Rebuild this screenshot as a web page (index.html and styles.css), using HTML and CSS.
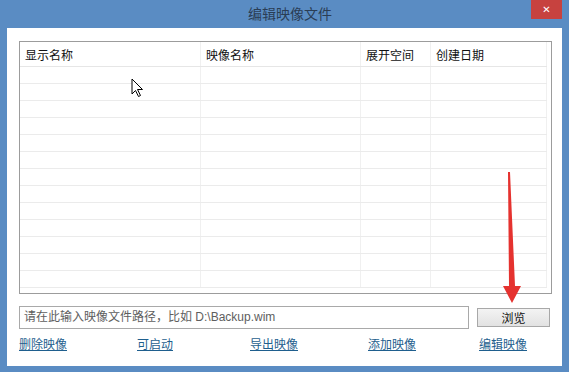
FILE: index.html
```html
<!DOCTYPE html>
<html lang="zh-CN">
  <head>
    <meta charset="UTF-8" />
    <title>编辑映像文件</title>
    <link rel="stylesheet" href="styles.css">
  </head>
  <body>
    <div class="window">
      <div class="titlebar">
        <span class="title">编辑映像文件</span>
        <span class="close">✕</span>
      </div>
      <div class="client">
        <div class="list">
          <table class="grid">
            <thead>
              <tr>
                <th class="c1">显示名称</th>
                <th class="c2">映像名称</th>
                <th class="c3">展开空间</th>
                <th class="c4">创建日期</th>
              </tr>
            </thead>
            <tbody>
              <tr><td></td><td></td><td></td><td></td></tr>
              <tr><td></td><td></td><td></td><td></td></tr>
              <tr><td></td><td></td><td></td><td></td></tr>
              <tr><td></td><td></td><td></td><td></td></tr>
              <tr><td></td><td></td><td></td><td></td></tr>
              <tr><td></td><td></td><td></td><td></td></tr>
              <tr><td></td><td></td><td></td><td></td></tr>
              <tr><td></td><td></td><td></td><td></td></tr>
              <tr><td></td><td></td><td></td><td></td></tr>
              <tr><td></td><td></td><td></td><td></td></tr>
              <tr><td></td><td></td><td></td><td></td></tr>
              <tr><td></td><td></td><td></td><td></td></tr>
              <tr><td></td><td></td><td></td><td></td></tr>
            </tbody>
          </table>
        </div>

        <div class="pathrow">
          <div class="pathbox">请在此输入映像文件路径，比如 D:\Backup.wim</div>
          <button type="button" class="browse">浏览</button>
        </div>

        <div class="links">
          <a href="#">删除映像</a>
          <a href="#">可启动</a>
          <a href="#">导出映像</a>
          <a href="#">添加映像</a>
          <a href="#">编辑映像</a>
        </div>
      </div>
    </div>

    <!-- mouse pointer in the list -->
    <svg class="cursor" width="14" height="20" viewBox="0 0 14 20">
      <path d="M1 1 L1 16 L4.5 12.5 L7.5 18.5 L9.5 17.5 L6.5 11.5 L11.5 11.5 Z" fill="#fff" stroke="#000" stroke-width="1" />
    </svg>

    <!-- red annotation arrow -->
    <svg class="arrow" width="30" height="140" viewBox="0 0 30 140">
      <polygon points="10,0 12,0 17,114 23,114 14,131 5,114 11,114" fill="#e5322f" />
    </svg>
  </body>
</html>
```

FILE: styles.css
```css
body {
  margin: 0;
  width: 569px;
  height: 372px;
  overflow: hidden;
  background-color: #5a8cc3;
  font-family: "Noto Sans CJK SC", "Liberation Sans", sans-serif;
}

.window {
  display: flex;
  flex-direction: column;
  height: 372px;
}

.titlebar {
  height: 28px;
  position: relative;
  display: flex;
  justify-content: center;
  align-items: center;
}

.title {
  font-size: 14px;
  color: #2a3d55;
  margin-top: -2px;
  margin-left: 11px;
}

.close {
  position: absolute;
  top: 0;
  right: 7px;
  width: 31px;
  height: 19px;
  background-color: #c7423f;
  color: #fff;
  font-size: 10px;
  display: flex;
  justify-content: center;
  align-items: center;
  font-family: "DejaVu Sans", sans-serif;
}

.client {
  background-color: #fff;
  margin: 0 7px 6px 7px;
  flex: 1;
  padding: 13px 10px 0 12px;
}

.list {
  border: 1px solid #9c9c9c;
  height: 251px;
  overflow: hidden;
}

.grid {
  border-collapse: collapse;
  table-layout: fixed;
  width: 527px;
}

.grid th {
  font-weight: normal;
  font-size: 12px;
  color: #111;
  text-align: left;
  height: 24px;
  padding: 0 0 0 5px;
  border-bottom: 1px solid #e6e6e6;
  border-right: 1px solid #f0f0f0;
}

.grid .c1 { width: 175px; }
.grid .c2 { width: 154px; }
.grid .c3 { width: 64px; }

.grid td {
  height: 16px;
  padding: 0;
  border-bottom: 1px solid #ebebeb;
  border-right: 1px solid #f0f0f0;
}

.pathrow {
  display: flex;
  align-items: center;
  margin-top: 12px;
}

.pathbox {
  width: 444px;
  height: 21px;
  border: 1px solid #a9a9a9;
  font-family: "Liberation Sans", "Noto Sans CJK SC", sans-serif;
  font-size: 12px;
  color: #5e5e5e;
  line-height: 21px;
  padding-left: 4px;
  box-sizing: content-box;
}

.browse {
  margin-left: 8px;
  width: 73px;
  height: 19px;
  border: 1px solid #a8a8a8;
  background: linear-gradient(#f3f3f3, #e2e2e2);
  font-family: "Noto Sans CJK SC", sans-serif;
  font-size: 12px;
  color: #111;
  padding: 0;
  line-height: 17px;
}

.links {
  display: grid;
  grid-template-columns: 118px 113px 118px 111px auto;
  margin-top: 6px;
}

.links a {
  font-size: 12px;
  color: #1f5f8e;
  text-decoration: underline;
}

.cursor {
  position: absolute;
  left: 131px;
  top: 78px;
}

.arrow {
  position: absolute;
  left: 498px;
  top: 172px;
}
```
